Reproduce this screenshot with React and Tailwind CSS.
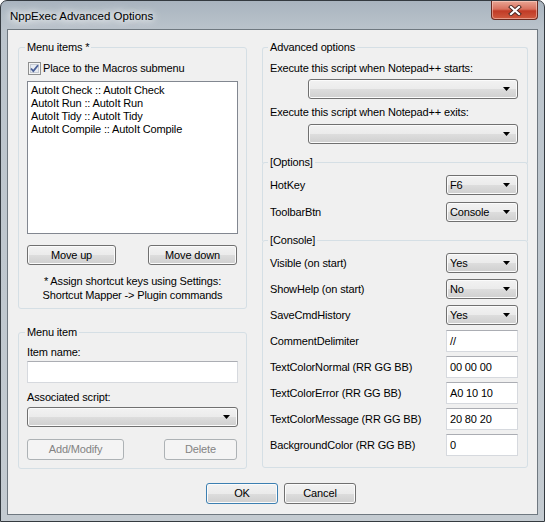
import React from 'react'

const btnFace =
  'bg-[linear-gradient(#f2f2f2_0%,#ebebeb_50%,#dddddd_51%,#cfcfcf_100%)] shadow-[inset_0_0_0_1px_#fbfbfb]'

const Arrow = () => (
  <svg width="7" height="4" viewBox="0 0 7 4" className="shrink-0">
    <path d="M0 0h7L3.5 4z" fill="#000" />
  </svg>
)

const Combo = ({ value = '', className = '' }) => (
  <div
    className={`flex items-center justify-between h-[20px] rounded-[3px] border border-[#707070] pl-[3px] pr-[7px] ${btnFace} ${className}`}
  >
    <span>{value}</span>
    <Arrow />
  </div>
)

const TextBox = ({ value = '', className = '' }) => (
  <div
    className={`flex items-center h-[22px] bg-white border border-[#d6d9de] border-t-[#abadb3] pl-[3px] ${className}`}
  >
    {value}
  </div>
)

const Button = ({ children, className = '', disabled, focused }) => (
  <div
    className={`flex items-center justify-center rounded-[3px] border ${
      disabled
        ? 'border-[#adb2b5] bg-[#f4f4f4] text-[#838383]'
        : focused
        ? `border-[#3c7fb1] ${btnFace} shadow-[inset_0_0_0_1px_#9fd8f2]`
        : `border-[#707070] ${btnFace}`
    } ${className}`}
  >
    {children}
  </div>
)

const CheckBox = () => (
  <svg width="13" height="13" viewBox="0 0 13 13" className="shrink-0">
    <rect x="0.5" y="0.5" width="12" height="12" fill="#f4f4f4" stroke="#8e8f8f" />
    <rect x="2.5" y="2.5" width="8" height="8" fill="#e8ecf2" stroke="#c5cad3" />
    <path d="M3 6.5l2.3 2.5L10 3.2" fill="none" stroke="#4a5f97" strokeWidth="1.8" />
  </svg>
)

const Row = ({ label, children, className = '' }) => (
  <div className={`flex items-center justify-between ${className}`}>
    <span>{label}</span>
    {children}
  </div>
)

const listItems = [
  'AutoIt Check :: AutoIt Check',
  'AutoIt Run :: AutoIt Run',
  'AutoIt Tidy :: AutoIt Tidy',
  'AutoIt Compile :: AutoIt Compile',
]

export default function App() {
  return (
    <div className="w-[545px] h-[524px] bg-white font-['Liberation_Sans',Arial,sans-serif] text-[11px] leading-[13px] tracking-[-0.15px] text-black">
      {/* window frame */}
      <div className="w-[545px] h-[522px] flex flex-col rounded-t-[7px] border border-[#343a40] bg-[linear-gradient(180deg,#a9b4bf_0px,#bbc4cc_30px,#c4cbd1_100%)] px-[6px] pb-[6px]">
        {/* title bar */}
        <div className="h-[28px] flex items-start justify-between">
          <div className="pl-[3px] pt-[8px] text-[11.5px] leading-[14px] tracking-normal [text-shadow:0_0_6px_#fff,0_0_10px_#fff,0_0_14px_#fff]">
            NppExec Advanced Options
          </div>
          <div className="w-[47px] h-[19px] rounded-b-[4px] border border-t-0 border-[#6b2a20] bg-[linear-gradient(#e9a594_0%,#d8715e_45%,#c13b26_55%,#cf5a3f_100%)] flex items-center justify-center shadow-[inset_0_0_0_1px_rgba(255,220,210,0.5)]">
            <svg width="14" height="11" viewBox="0 0 14 11">
              <path d="M3 2l8 7M11 2l-8 7" stroke="#4a2620" strokeWidth="4" strokeLinecap="square" />
              <path d="M3 2l8 7M11 2l-8 7" stroke="#fff" strokeWidth="2.2" strokeLinecap="square" />
            </svg>
          </div>
        </div>

        {/* client area */}
        <div className="flex-1 border border-[#6f7880] bg-[#f0f0f0] pl-[10px] pr-[7px] pt-[11px] flex flex-col">
          <div className="flex gap-[15px]">
            {/* left column */}
            <div className="w-[229px] flex flex-col">
              <fieldset className="border border-[#d5dfe5] rounded-[3px] px-[8px] pb-[6px]">
                <legend className="-ml-[2px] px-[2px]">Menu items *</legend>
                <div className="flex items-center gap-[2px] mt-[8px] ml-[1px]">
                  <CheckBox />
                  <span>Place to the Macros submenu</span>
                </div>
                <div className="mt-[6px] h-[153px] bg-white border border-[#828790] pl-[3px] pt-[2px]">
                  {listItems.map((item) => (
                    <div key={item}>{item}</div>
                  ))}
                </div>
                <div className="mt-[11px] flex justify-between pr-[1px]">
                  <Button className="w-[89px] h-[20px]">Move up</Button>
                  <Button className="w-[89px] h-[20px]">Move down</Button>
                </div>
                <div className="mt-[9px] text-center leading-[14px]">
                  * Assign shortcut keys using Settings:
                  <br />
                  Shortcut Mapper -&gt; Plugin commands
                </div>
              </fieldset>

              <fieldset className="mt-[17px] border border-[#d5dfe5] rounded-[3px] px-[8px] pb-[8px]">
                <legend className="-ml-[2px] px-[2px]">Menu item</legend>
                <div className="mt-[7px]">Item name:</div>
                <TextBox className="mt-[2px]" />
                <div className="mt-[8px]">Associated script:</div>
                <Combo className="mt-[3px]" />
                <div className="mt-[12px] flex justify-between pr-[1px]">
                  <Button disabled className="w-[97px] h-[21px]">Add/Modify</Button>
                  <Button disabled className="w-[73px] h-[21px]">Delete</Button>
                </div>
              </fieldset>
            </div>

            {/* right column */}
            <div className="w-[266px] flex flex-col">
              <fieldset className="border border-b-0 border-[#d5dfe5] rounded-t-[3px] pl-[7px] pr-[9px] pb-[19px]">
                <legend className="-ml-[2px] px-[2px]">Advanced options</legend>
                <div className="mt-[8px]">Execute this script when Notepad++ starts:</div>
                <Combo className="mt-[4px] ml-auto w-[210px]" />
                <div className="mt-[7px]">Execute this script when Notepad++ exits:</div>
                <Combo className="mt-[5px] ml-auto w-[210px]" />
              </fieldset>

              <fieldset className="-mt-[7px] border border-b-0 border-[#d5dfe5] rounded-t-[3px] pl-[7px] pr-[9px] pb-[19px]">
                <legend className="-ml-[2px] px-[2px]">[Options]</legend>
                <Row label="HotKey" className="mt-[6px]">
                  <Combo value="F6" className="w-[72px]" />
                </Row>
                <Row label="ToolbarBtn" className="mt-[7px]">
                  <Combo value="Console" className="w-[72px]" />
                </Row>
              </fieldset>

              <fieldset className="-mt-[7px] border border-[#d5dfe5] rounded-[3px] pl-[7px] pr-[9px] pb-[11px]">
                <legend className="-ml-[2px] px-[2px]">[Console]</legend>
                <Row label="Visible (on start)" className="mt-[6px]">
                  <Combo value="Yes" className="w-[72px]" />
                </Row>
                <Row label="ShowHelp (on start)" className="mt-[6px]">
                  <Combo value="No" className="w-[72px]" />
                </Row>
                <Row label="SaveCmdHistory" className="mt-[6px]">
                  <Combo value="Yes" className="w-[72px]" />
                </Row>
                <Row label="CommentDelimiter" className="mt-[5px]">
                  <TextBox value="//" className="w-[72px]" />
                </Row>
                <Row label="TextColorNormal (RR GG BB)" className="mt-[4px]">
                  <TextBox value="00 00 00" className="w-[72px]" />
                </Row>
                <Row label="TextColorError (RR GG BB)" className="mt-[4px]">
                  <TextBox value="A0 10 10" className="w-[72px]" />
                </Row>
                <Row label="TextColorMessage (RR GG BB)" className="mt-[4px]">
                  <TextBox value="20 80 20" className="w-[72px]" />
                </Row>
                <Row label="BackgroundColor (RR GG BB)" className="mt-[4px]">
                  <TextBox value="0" className="w-[72px]" />
                </Row>
              </fieldset>
            </div>
          </div>

          {/* dialog buttons */}
          <div className="mt-[14px] ml-[188px] flex gap-[6px]">
            <Button focused className="w-[72px] h-[21px]">OK</Button>
            <Button className="w-[72px] h-[21px]">Cancel</Button>
          </div>
        </div>
      </div>
    </div>
  )
}
